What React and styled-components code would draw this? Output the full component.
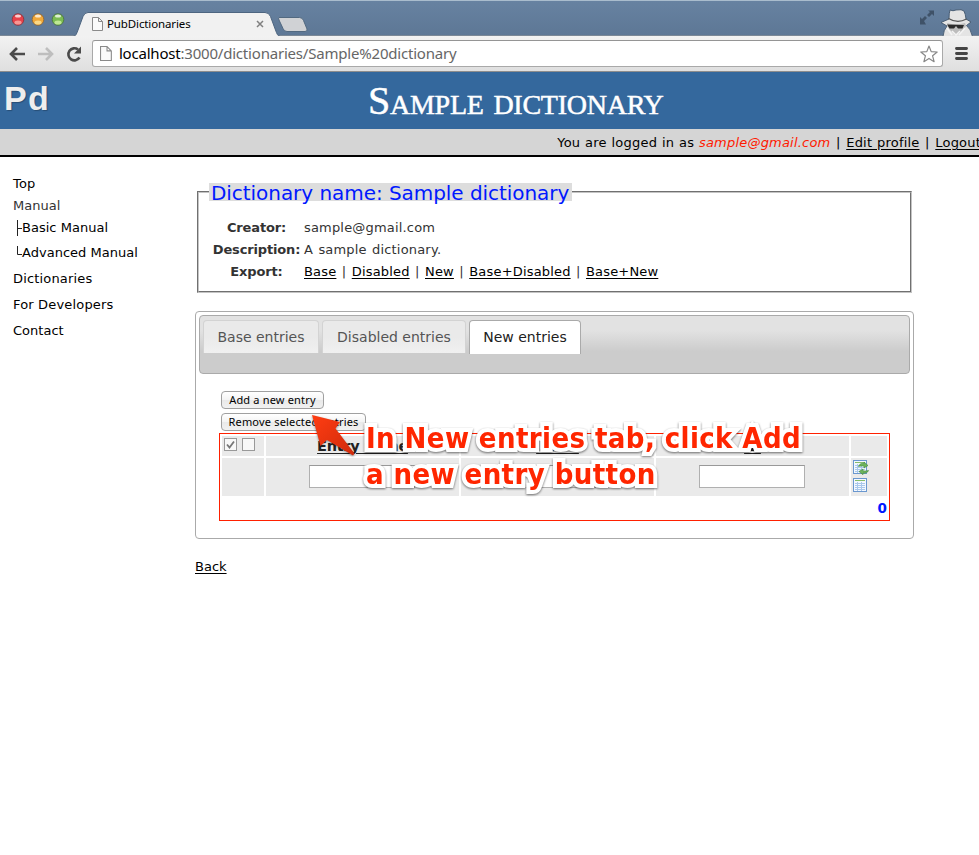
import React from "react";
import styled, { createGlobalStyle } from "styled-components";

const Global = createGlobalStyle`
  * { box-sizing: border-box; }
  html, body { margin: 0; padding: 0; background: #fff; overflow: hidden; }
  body { font-family: "DejaVu Sans", Verdana, sans-serif; font-size: 13px; color: #333; }
`;

const Browser = styled.div`
  width: 979px;
  height: 855px;
  display: flex;
  flex-direction: column;
  background: #fff;
  overflow: hidden;
`;

const TabStrip = styled.div`
  height: 36px;
  flex: none;
  display: flex;
  justify-content: space-between;
  border-top: 1px solid #a9bccd;
  background: linear-gradient(#6782a1, #5d7795);
  box-shadow: inset 0 -1px #7b8896;
`;
const StripSide = styled.div`
  display: flex;
`;
const Lights = styled.svg`
  width: 76px;
  height: 34px;
`;
const BrowserTab = styled.div`
  position: relative;
  width: 204px;
  height: 35px;
`;
const TabShape = styled.svg`
  position: absolute;
  left: -3px;
  top: 0;
`;
const TabContent = styled.div`
  position: relative;
  display: flex;
  align-items: center;
  height: 24px;
  margin-top: 11px;
  padding: 0 16px;
`;
const TabTitle = styled.span`
  flex: 1;
  margin: -2px 0 0 4px;
  font: 11.5px "Noto Sans", "Lucida Grande", sans-serif;
  letter-spacing: -0.12px;
  color: #000;
`;

const Toolbar = styled.div`
  height: 36px;
  flex: none;
  display: flex;
  align-items: center;
  padding: 0 10px 0 9px;
  background: linear-gradient(#f2f2f2, #dfdfdf);
  border-bottom: 1px solid #8d8d8d;
`;
const NavIcons = styled.svg`
  width: 83px;
  height: 30px;
  flex: none;
`;
const AddressBar = styled.div`
  flex: none;
  width: 851px;
  height: 27px;
  display: flex;
  align-items: center;
  padding: 0 4px 0 7px;
  background: #fff;
  border: 1px solid #a9a9a9;
  border-top-color: #959595;
  border-radius: 3px;
`;
const Url = styled.span`
  flex: 1;
  margin: -2px 0 0 7px;
  font: 15px "Noto Sans", "Lucida Grande", sans-serif;
  letter-spacing: -0.2px;
  color: #666;
  white-space: nowrap;
`;
const Host = styled.span`
  color: #000;
`;
const MenuIcon = styled.svg`
  margin-left: 12px;
`;

const Masthead = styled.header`
  height: 57px;
  flex: none;
  display: flex;
  background: #34689d;
`;
const Logo = styled.div`
  width: 195px;
  padding: 6px 0 0 4px;
  font: bold 34px/40px "Liberation Sans", Arial, sans-serif;
  letter-spacing: 1.2px;
  color: #eee;
  text-shadow: 1px 1px 1px rgba(0, 0, 0, 0.25);
`;
const Title = styled.h1`
  margin: 0;
  padding: 6px 0 0 173px;
  font: normal 40px/46px "Liberation Serif", "Times New Roman", serif;
  font-variant: small-caps;
  letter-spacing: -0.25px;
  color: #fff;
  -webkit-text-stroke: 0.5px #fff;
  white-space: nowrap;
`;
const UserBar = styled.div`
  height: 28px;
  flex: none;
  display: flex;
  justify-content: flex-end;
  gap: 5.6px;
  margin-right: -2px;
  background: #d5d5d5;
  border-bottom: 2px solid #000;
  font-size: 13px;
  line-height: 27px;
  letter-spacing: 0.2px;
  word-spacing: 0.5px;
  color: #000;
  white-space: nowrap;
`;
const Email = styled.em`
  color: #ff1a00;
`;
const Link = styled.a`
  color: #000;
  text-decoration: underline;
  text-underline-offset: 2px;
`;

const Body = styled.div`
  display: flex;
  flex: 1;
`;
const Sidebar = styled.nav`
  width: 195px;
  flex: none;
  padding: 16px 0 0 13px;
  color: #000;
`;
const NavItem = styled.div`
  height: ${(p) => p.$h}px;
  line-height: 22px;
  letter-spacing: ${(p) => (p.$plain ? "0.02px" : "0.17px")};
  color: ${(p) => (p.$muted ? "#333" : "#000")};
  display: flex;
`;
const Branch = styled.svg`
  width: 9px;
  height: 22px;
  flex: none;
`;

const Main = styled.main`
  width: 719px;
  flex: none;
`;
const Details = styled.fieldset`
  margin: 26px 2px 0;
  height: 110px;
  padding: 0 0 0 10px;
  border: 2px groove #c4c4c4;
`;
const Legend = styled.legend`
  height: 18px;
  padding: 0 3px 0 2px;
  background: #ddd;
  color: #0018ff;
  font-size: 20px;
  line-height: 20px;
  letter-spacing: -0.05px;
  white-space: nowrap;
`;
const Facts = styled.dl`
  margin: 16px 0 0;
  display: grid;
  grid-template-columns: 95px 1fr;
  grid-auto-rows: 22px;
  line-height: 22px;
`;
const Term = styled.dt`
  font-weight: bold;
  text-align: center;
  letter-spacing: -0.15px;
  white-space: nowrap;
`;
const Fact = styled.dd`
  margin: 0;
  display: flex;
  gap: 5.4px;
  letter-spacing: 0.18px;
  word-spacing: 1px;
`;

const Tabs = styled.section`
  margin-top: 18px;
  height: 228px;
  padding: 3px;
  border: 1px solid #aaa;
  border-radius: 4px;
`;
const TabList = styled.div`
  height: 59px;
  display: flex;
  gap: 3px;
  padding: 4px 0 0 3px;
  border: 1px solid #aaa;
  border-radius: 4px;
  background: linear-gradient(#e2e2e2 25%, #ccc 62%);
`;
const Tab = styled.div`
  width: ${(p) => p.$w}px;
  height: ${(p) => (p.$active ? 34 : 33)}px;
  border: 1px solid ${(p) => (p.$active ? "#aaa" : "#d3d3d3")};
  border-bottom: 0;
  border-radius: 4px 4px 0 0;
  background: ${(p) => (p.$active ? "#fff" : "linear-gradient(#eaeaea 50%, #f0f0f0)")};
  color: ${(p) => (p.$active ? "#212121" : "#555")};
  font-size: 14px;
  line-height: 33px;
  text-align: center;
  white-space: nowrap;
`;
const Panel = styled.div`
  padding: 17px 0 0 20px;
  display: flex;
  flex-direction: column;
  align-items: flex-start;
`;
const Button = styled.button`
  width: ${(p) => p.$w}px;
  height: 18px;
  margin: 0 0 4px 2px;
  padding: 0 0 1px;
  border: 1px solid #a0a0a0;
  border-radius: 4px;
  background: linear-gradient(#fff, #f3f3f3 50%, #e9e9e9 51%, #f1f1f1);
  color: #000;
  font: 11px/14px "Noto Sans", "Lucida Grande", sans-serif;
  letter-spacing: 0.18px;
  white-space: nowrap;
`;
const EntryTable = styled.div`
  width: 671px;
  height: 88px;
  margin-top: -2px;
  padding: 2px;
  border: 1px solid #ff2000;
  display: grid;
  grid-template-columns: 42px 193px 193px 193px 36px;
  grid-template-rows: 20px 38px 22px;
  gap: 2px;
`;
const Cell = styled.div`
  display: flex;
  align-items: center;
  justify-content: center;
  background: #eaeaea;
`;
const FieldCell = styled(Cell)`
  padding: 0 1px 1px 0;
`;
const CheckCell = styled(Cell)`
  align-items: flex-start;
  justify-content: flex-start;
  gap: 5px;
  padding: 2px;
`;
const Check = styled.span`
  width: 13px;
  height: 13px;
  border: 1px solid #999;
  background: #f8f8f8;
  display: flex;
`;
const ColumnName = styled.span`
  font-size: 14.5px;
  font-weight: bold;
  line-height: 18px;
  color: #222;
  text-decoration: underline;
  text-underline-offset: 2px;
  letter-spacing: -0.3px;
  white-space: nowrap;
`;
const Field = styled.input`
  width: 106px;
  height: 23px;
  padding: 0;
  border: 1px solid #b0b0b0;
  border-top-color: #999;
  background: #fff;
`;
const Actions = styled(Cell)`
  flex-direction: column;
  align-items: flex-start;
  justify-content: flex-start;
  gap: 2px;
  padding: 1px 0 0 1px;
`;
const Count = styled.div`
  grid-column: 1 / -1;
  text-align: right;
  font-size: 13.5px;
  font-weight: bold;
  line-height: 21px;
  color: #0018ff;
`;
const Back = styled.div`
  margin-top: 17px;
  line-height: 22px;
`;

const Overlay = styled.div`
  position: absolute;
  left: 300px;
  top: 405px;
  width: 520px;
  height: 100px;
`;
const Arrow = styled.svg`
  position: absolute;
  left: 0;
  top: 0;
  filter: drop-shadow(0 1px 1px rgba(0, 0, 0, 0.4));
`;
const Note = styled.p`
  position: absolute;
  left: 66px;
  top: 15px;
  margin: 0;
  font: bold 29px/36px "DejaVu Sans Condensed", "DejaVu Sans", Tahoma, sans-serif;
  font-stretch: condensed;
  letter-spacing: 0.4px;
  color: #ff2600;
  -webkit-text-stroke: 8px #fff;
  paint-order: stroke fill;
  filter: drop-shadow(0 1px 1px rgba(0, 0, 0, 0.55));
  white-space: nowrap;
`;
const NoteLine = styled.span`
  display: block;
`;

const PageIcon = ({ s = 1 }) => (
  <svg width={11 * s} height={14 * s} viewBox="0 0 11 14">
    <path d="M.5.5h6l4 4v9H.5zM6.5.5v4h4" fill="#fafafa" stroke="#8a8a8a" />
  </svg>
);

const TableIcon = ({ refresh }) => (
  <svg width="17" height="16" viewBox="0 0 17 16">
    <rect x="1.5" y="1.5" width="13" height="13" fill="#f3f8fe" stroke="#6a97cf" />
    <path d="M3 3.5h10" stroke="#86bd6b" />
    <path d="M3 6.5h10M3 8.5h10M3 10.5h10M3 12.5h10M5.500 5v9M9.500 5v9" stroke="#a9c8ec" />
    {refresh && (
      <g fill="#6cb35c" stroke="#458c3e" strokeWidth=".6">
        <path d="M6.500 7.500c1-3 3.500-3.500 5.500-3V3l4 3.500L12 9V7.200c-2-.4-4-.2-5.500.3z" />
        <path d="M16.500 11.500c-1 2.500-3 3-5.500 2.500v1.700L7 12.500 11 10v1.800c2 .4 4 .2 5.500-.3z" />
      </g>
    )}
  </svg>
);

const exportKinds = ["Base", "Disabled", "New", "Base+Disabled", "Base+New"];

export default function App() {
  return (
    <Browser>
      <Global />
      <TabStrip>
        <StripSide>
          <Lights viewBox="0 0 76 34">
            {[
              [18, "#e8424a", "#ffb3ac", "#8c2f36"],
              [38, "#f0a83a", "#ffeaa0", "#92652c"],
              [58, "#7cbc53", "#d5f7a9", "#47743a"],
            ].map(([x, fill, glow, edge]) => (
              <g key={x}>
                <circle cx={x} cy="18.500" r="5.800" fill={fill} stroke={edge} strokeWidth=".8" />
                <ellipse cx={x} cy="21.500" rx="3.600" ry="2" fill={glow} opacity=".75" />
                <ellipse cx={x} cy="15" rx="3" ry="1.600" fill="#fff" opacity=".75" />
              </g>
            ))}
          </Lights>
          <BrowserTab>
            <TabShape width="240" height="35" viewBox="0 0 240 35">
              <path
                d="M0 35.500C3 35 3.500 33 5 29L10 15.500q1.500-4 5-4H192q4 0 5.500 4l5 13.500c1.500 4 2 6 5 6.500"
                fill="#f1f1f1"
                stroke="#4d6580"
              />
              <path
                d="M206 16.500h20.500q3 0 4 3l3.500 8.500q.6 2.500-2 2.500H214q-3 0-4-3l-4-8.500q-1-2.500 0-2.500z"
                fill="#d0d2d5"
                stroke="#526980"
              />
            </TabShape>
            <TabContent>
              <PageIcon />
              <TabTitle>PubDictionaries</TabTitle>
              <svg width="8" height="8" viewBox="0 0 8 8">
                <path d="M1 1l6 6M7 1L1 7" stroke="#808080" strokeWidth="1.500" />
              </svg>
            </TabContent>
          </BrowserTab>
        </StripSide>
        <svg width="61" height="35" viewBox="0 0 61 35">
          <path
            d="M10 9.500h6V15l-2-2-3 3-2-2 3-3zM2 16l2 2 3-3 2 2-3 3 2 3.500H2z"
            fill="#3f5268"
          />
          <path
            d="M32 9q3 1.500 6 0 6-1 8 1 1.500 3 2 8l5 3-4.500 3.500q4 3 6 11H25q.5-6.500 4-10.500l-6-3.500L31 18q0-6 1-9z"
            fill="#e4e4e4"
            stroke="#41566d"
            strokeWidth=".9"
          />
          <path d="M30.500 17.500q9 5.500 18 .5" fill="none" stroke="#555" strokeWidth="1.300" />
          <path d="M29 22q9 2.500 18 0l1 3-4 6-7 3-6-6z" fill="#bdbdbd" />
          <path d="M29 23.500l17 .5-1.500 3.500h-4.500l-2-2.500-2 2.500h-4.500z" fill="#2c2c2c" />
          <path d="M29 27l5 7M47 27l-6 7M34 30l4 4 4-4" fill="none" stroke="#f4f4f4" strokeWidth="1.500" />
        </svg>
      </TabStrip>
      <Toolbar>
        <NavIcons viewBox="0 0 83 30" fill="none">
          <path d="M2 15h14M8 9l-6 6 6 6" stroke="#4b4b4b" strokeWidth="2.600" />
          <path d="M29 15h14M37 9l6 6-6 6" stroke="#bebebe" strokeWidth="2.600" />
          <path d="M70.500 18.500a6 6 0 1 1-1.500-8" stroke="#4b4b4b" strokeWidth="2.600" />
          <path d="M72 7.500v7h-7z" fill="#4b4b4b" />
        </NavIcons>
        <AddressBar>
          <PageIcon s={1.08} />
          <Url>
            <Host>localhost</Host>:3000/dictionaries/Sample%20dictionary
          </Url>
          <svg width="18" height="18" viewBox="0 0 18 18">
            <path
              d="M9 1l2.200 5.600 6 .4-4.600 3.800 1.500 5.900L9 13.400l-5.100 3.300 1.500-5.900L.8 7l6-.4z"
              fill="#fff"
              stroke="#888"
              strokeWidth="1.200"
              strokeLinejoin="round"
            />
          </svg>
        </AddressBar>
        <MenuIcon width="13" height="13" viewBox="0 0 13 13">
          <path d="M1.500 1.500h10M1.500 6.500h10M1.500 11.500h10" stroke="#444" strokeWidth="2.900" strokeLinecap="round" />
        </MenuIcon>
      </Toolbar>

      <Masthead>
        <Logo>Pd</Logo>
        <Title>Sample dictionary</Title>
      </Masthead>
      <UserBar>
        <span>
          You are logged in as <Email>sample@gmail.com</Email>
        </span>
        <span>|</span>
        <Link>Edit profile</Link>
        <span>|</span>
        <Link>Logout</Link>
      </UserBar>

      <Body>
        <Sidebar>
          <NavItem $h={22}>Top</NavItem>
          <NavItem $h={22} $muted $plain>Manual</NavItem>
          <NavItem $h={25} $plain>
            <Branch viewBox="0 0 9 22">
              <path d="M4.500 3v16M4.500 11.500H9" stroke="#222" />
            </Branch>
            Basic Manual
          </NavItem>
          <NavItem $h={26} $plain>
            <Branch viewBox="0 0 9 22">
              <path d="M4.500 4v8.500H9" stroke="#222" fill="none" />
            </Branch>
            Advanced Manual
          </NavItem>
          <NavItem $h={26}>Dictionaries</NavItem>
          <NavItem $h={26}>For Developers</NavItem>
          <NavItem $h={26} $plain>Contact</NavItem>
        </Sidebar>

        <Main>
          <Details>
            <Legend>Dictionary name: Sample dictionary</Legend>
            <Facts>
              <Term>Creator:</Term>
              <Fact>sample@gmail.com</Fact>
              <Term>Description:</Term>
              <Fact>A sample dictionary.</Fact>
              <Term>Export:</Term>
              <Fact>
                {exportKinds.map((name, i) => (
                  <React.Fragment key={name}>
                    {i > 0 && <span>|</span>}
                    <Link>{name}</Link>
                  </React.Fragment>
                ))}
              </Fact>
            </Facts>
          </Details>

          <Tabs>
            <TabList>
              <Tab $w={116}>Base entries</Tab>
              <Tab $w={144}>Disabled entries</Tab>
              <Tab $w={112} $active>New entries</Tab>
            </TabList>
            <Panel>
              <Button $w={103}>Add a new entry</Button>
              <Button $w={145}>Remove selected entries</Button>
              <EntryTable>
                <CheckCell>
                  <Check>
                    <svg width="11" height="11" viewBox="0 0 11 11">
                      <path d="M2 5.500l2.500 3L9 2.500" fill="none" stroke="#777" strokeWidth="1.800" />
                    </svg>
                  </Check>
                  <Check />
                </CheckCell>
                <Cell><ColumnName>Entry name</ColumnName></Cell>
                <Cell><ColumnName>Label</ColumnName></Cell>
                <Cell><ColumnName>ID</ColumnName></Cell>
                <Cell />
                <Cell />
                <FieldCell><Field /></FieldCell>
                <FieldCell><Field /></FieldCell>
                <FieldCell><Field /></FieldCell>
                <Actions>
                  <TableIcon refresh />
                  <TableIcon />
                </Actions>
                <Count>0</Count>
              </EntryTable>
            </Panel>
          </Tabs>
          <Back><Link>Back</Link></Back>
        </Main>
      </Body>

      <Overlay>
        <Arrow width="70" height="60" viewBox="0 0 70 60">
          <defs>
            <linearGradient id="arrow" x1="0" y1="0" x2="1" y2="1">
              <stop offset="0" stopColor="#ff3d12" />
              <stop offset="1" stopColor="#cf2a0c" />
            </linearGradient>
          </defs>
          <path d="M12 10L40 17 35.500 23.500 54.500 48.500 53 50.500 27 35 20.500 41z" fill="url(#arrow)" />
        </Arrow>
        <Note>
          <NoteLine>In New entries tab, click Add</NoteLine>
          <NoteLine>a new entry button</NoteLine>
        </Note>
      </Overlay>
    </Browser>
  );
}
